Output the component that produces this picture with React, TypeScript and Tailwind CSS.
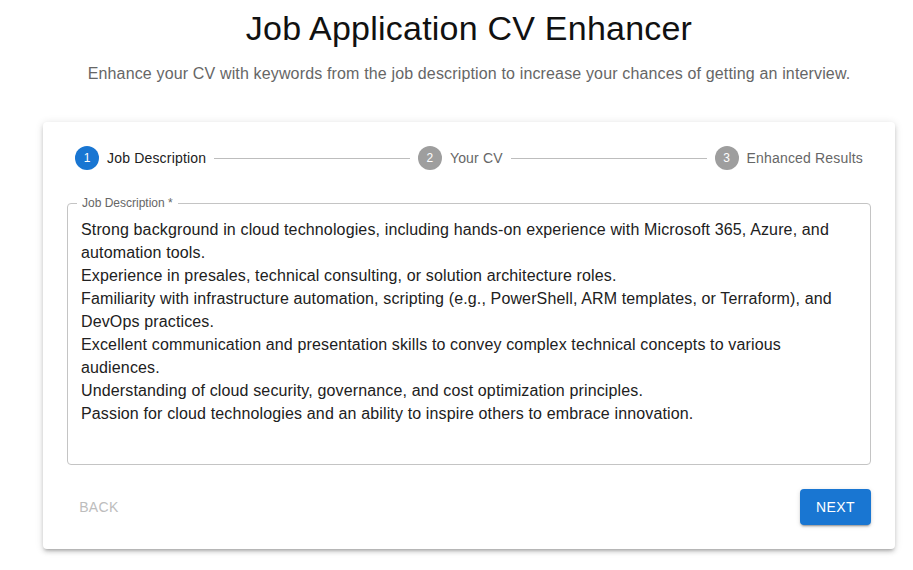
import React, { useState } from 'react';

const JOB_TEXT = `Strong background in cloud technologies, including hands-on experience with Microsoft 365, Azure, and automation tools.
Experience in presales, technical consulting, or solution architecture roles.
Familiarity with infrastructure automation, scripting (e.g., PowerShell, ARM templates, or Terraform), and DevOps practices.
Excellent communication and presentation skills to convey complex technical concepts to various audiences.
Understanding of cloud security, governance, and cost optimization principles.
Passion for cloud technologies and an ability to inspire others to embrace innovation.`;

const steps = ['Job Description', 'Your CV', 'Enhanced Results'];

const App = () => {
  const [activeStep] = useState(0);
  const [jobText, setJobText] = useState(JOB_TEXT);

  return (
    <div className="min-h-screen bg-white font-['Liberation_Sans',Arial,sans-serif]">
      <div className="w-[900px] ml-[19px] px-6 pt-[7px]">
        {/* Header */}
        <h1 className="text-center text-[34px] leading-[42px] tracking-[0.22px] text-[#111111]">
          Job Application CV Enhancer
        </h1>
        <p className="mt-[13px] text-center text-base leading-6 tracking-[0.15px] text-[#666666]">
          Enhance your CV with keywords from the job description to increase your chances of getting an interview.
        </p>

        {/* Card */}
        <div className="mt-[36px] rounded bg-white p-6 shadow-[0_3px_3px_-2px_rgba(0,0,0,0.2),0_3px_4px_0_rgba(0,0,0,0.14),0_1px_8px_0_rgba(0,0,0,0.12)]">
          {/* Stepper */}
          <div className="flex items-center px-2">
            {steps.map((label, i) => (
              <React.Fragment key={label}>
                {i > 0 && <div className="mx-2 h-px flex-1 bg-[#bdbdbd]" />}
                <div className="flex items-center">
                  <div
                    className={`flex h-6 w-6 items-center justify-center rounded-full text-xs text-white ${
                      i === activeStep ? 'bg-[#1976d2]' : 'bg-[#9e9e9e]'
                    }`}
                  >
                    {i + 1}
                  </div>
                  <span
                    className={`pl-2 text-sm tracking-[0.18px] ${
                      i === activeStep ? 'text-[#212121]' : 'text-[#666666]'
                    }`}
                  >
                    {label}
                  </span>
                </div>
              </React.Fragment>
            ))}
          </div>

          {/* Text field */}
          <div className="relative mt-[33px] rounded border border-[#c4c4c4] pl-[13px] pr-[14px] pt-[14px] pb-[16px]">
            <span className="absolute -top-[9px] left-[9px] bg-white px-[5px] text-xs leading-4 text-[#666666]">
              Job Description *
            </span>
            <textarea
              value={jobText}
              onChange={(e) => setJobText(e.target.value)}
              rows={10}
              className="block h-[230px] w-full resize-none overflow-hidden bg-transparent text-base leading-[23px] tracking-[0.14px] text-[#212121] outline-none"
            />
          </div>

          {/* Actions */}
          <div className="mt-6 flex items-center justify-between">
            <button
              disabled
              className="h-9 min-w-16 rounded px-2 text-sm uppercase tracking-[0.4px] text-[#bdbdbd]"
            >
              Back
            </button>
            <button className="h-9 min-w-16 rounded bg-[#1976d2] px-4 text-sm uppercase tracking-[0.4px] text-white shadow-[0_3px_1px_-2px_rgba(0,0,0,0.2),0_2px_2px_0_rgba(0,0,0,0.14),0_1px_5px_0_rgba(0,0,0,0.12)]">
              Next
            </button>
          </div>
        </div>
      </div>
    </div>
  );
};

export default App;
